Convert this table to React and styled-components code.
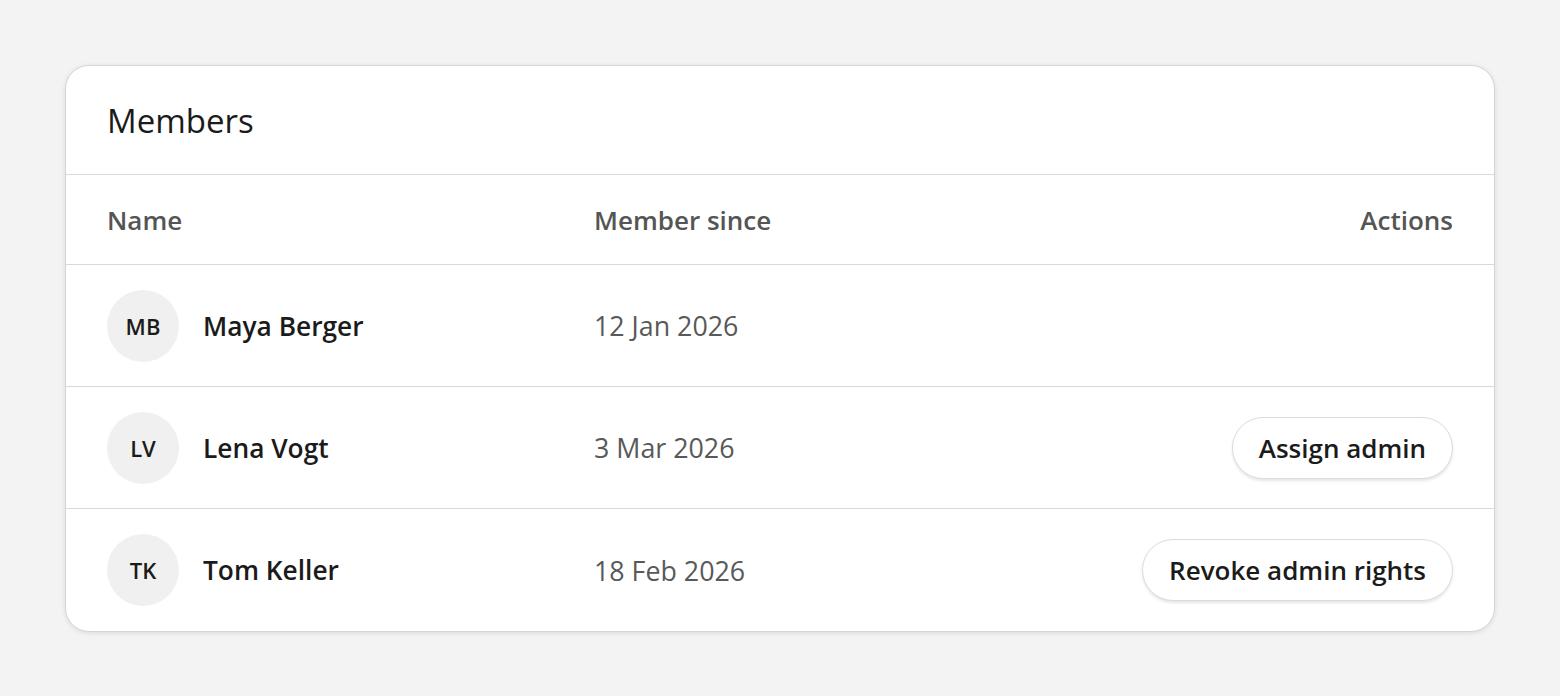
import React from "react";
import styled, { createGlobalStyle } from "styled-components";

const Global = createGlobalStyle`
  html, body { margin: 0; padding: 0; background: #f3f3f3; }
  body { font-family: "Open Sans", "Noto Sans", sans-serif; color: #1b1b1b; }
  * { box-sizing: border-box; }
`;

const Page = styled.div`
  padding: 65px 65px;
  min-height: 696px;
`;

const Card = styled.section`
  background: #fff;
  border: 1px solid #d6d6d6;
  border-radius: 24px;
  box-shadow: 0 1px 5px rgba(0, 0, 0, 0.1);
  overflow: hidden;
`;

const Title = styled.h2`
  margin: 0;
  height: 109px;
  display: flex;
  align-items: center;
  padding: 0 41px;
  font-size: 33px;
  font-weight: 400;
  color: #1b1b1b;
  border-bottom: 1px solid #d9d9d9;
`;

const Row = styled.div`
  display: grid;
  grid-template-columns: 487px 1fr auto;
  align-items: center;
  padding: 0 41px;
  height: ${(p) => (p.$head ? "90px" : "122px")};
  border-bottom: ${(p) => (p.$last ? "none" : "1px solid #d9d9d9")};
`;

const HeadCell = styled.div`
  font-size: 26px;
  font-weight: 600;
  color: #555;
  text-align: ${(p) => (p.$right ? "right" : "left")};
`;

const NameCell = styled.div`
  display: flex;
  align-items: center;
  gap: 24px;
`;

const Avatar = styled.div`
  width: 72px;
  height: 72px;
  border-radius: 50%;
  background: #f0f0f0;
  display: flex;
  align-items: center;
  justify-content: center;
  font-size: 22px;
  font-weight: 600;
  color: #1b1b1b;
`;

const Name = styled.span`
  font-size: 26.3px;
  font-weight: 600;
  color: #1b1b1b;
`;

const DateCell = styled.div`
  font-size: 26.8px;
  color: #595959;
`;

const ActionCell = styled.div`
  display: flex;
  justify-content: flex-end;
`;

const Button = styled.button`
  font-family: inherit;
  height: 62px;
  padding: 0 26px;
  border-radius: 31px;
  border: 1px solid #dcdcdc;
  background: #fff;
  box-shadow: 0 2px 3px rgba(0, 0, 0, 0.1);
  font-size: 26px;
  font-weight: 600;
  color: #1b1b1b;
  cursor: pointer;
`;

const members = [
  { initials: "MB", name: "Maya Berger", since: "12 Jan 2026", action: null },
  { initials: "LV", name: "Lena Vogt", since: "3 Mar 2026", action: "Assign admin" },
  { initials: "TK", name: "Tom Keller", since: "18 Feb 2026", action: "Revoke admin rights" },
];

export default function App() {
  return (
    <>
      <Global />
      <Page>
        <Card>
          <Title>Members</Title>
          <Row $head>
            <HeadCell>Name</HeadCell>
            <HeadCell>Member since</HeadCell>
            <HeadCell $right>Actions</HeadCell>
          </Row>
          {members.map((m, i) => (
            <Row key={m.initials} $last={i === members.length - 1}>
              <NameCell>
                <Avatar>{m.initials}</Avatar>
                <Name>{m.name}</Name>
              </NameCell>
              <DateCell>{m.since}</DateCell>
              <ActionCell>{m.action && <Button>{m.action}</Button>}</ActionCell>
            </Row>
          ))}
        </Card>
      </Page>
    </>
  );
}
